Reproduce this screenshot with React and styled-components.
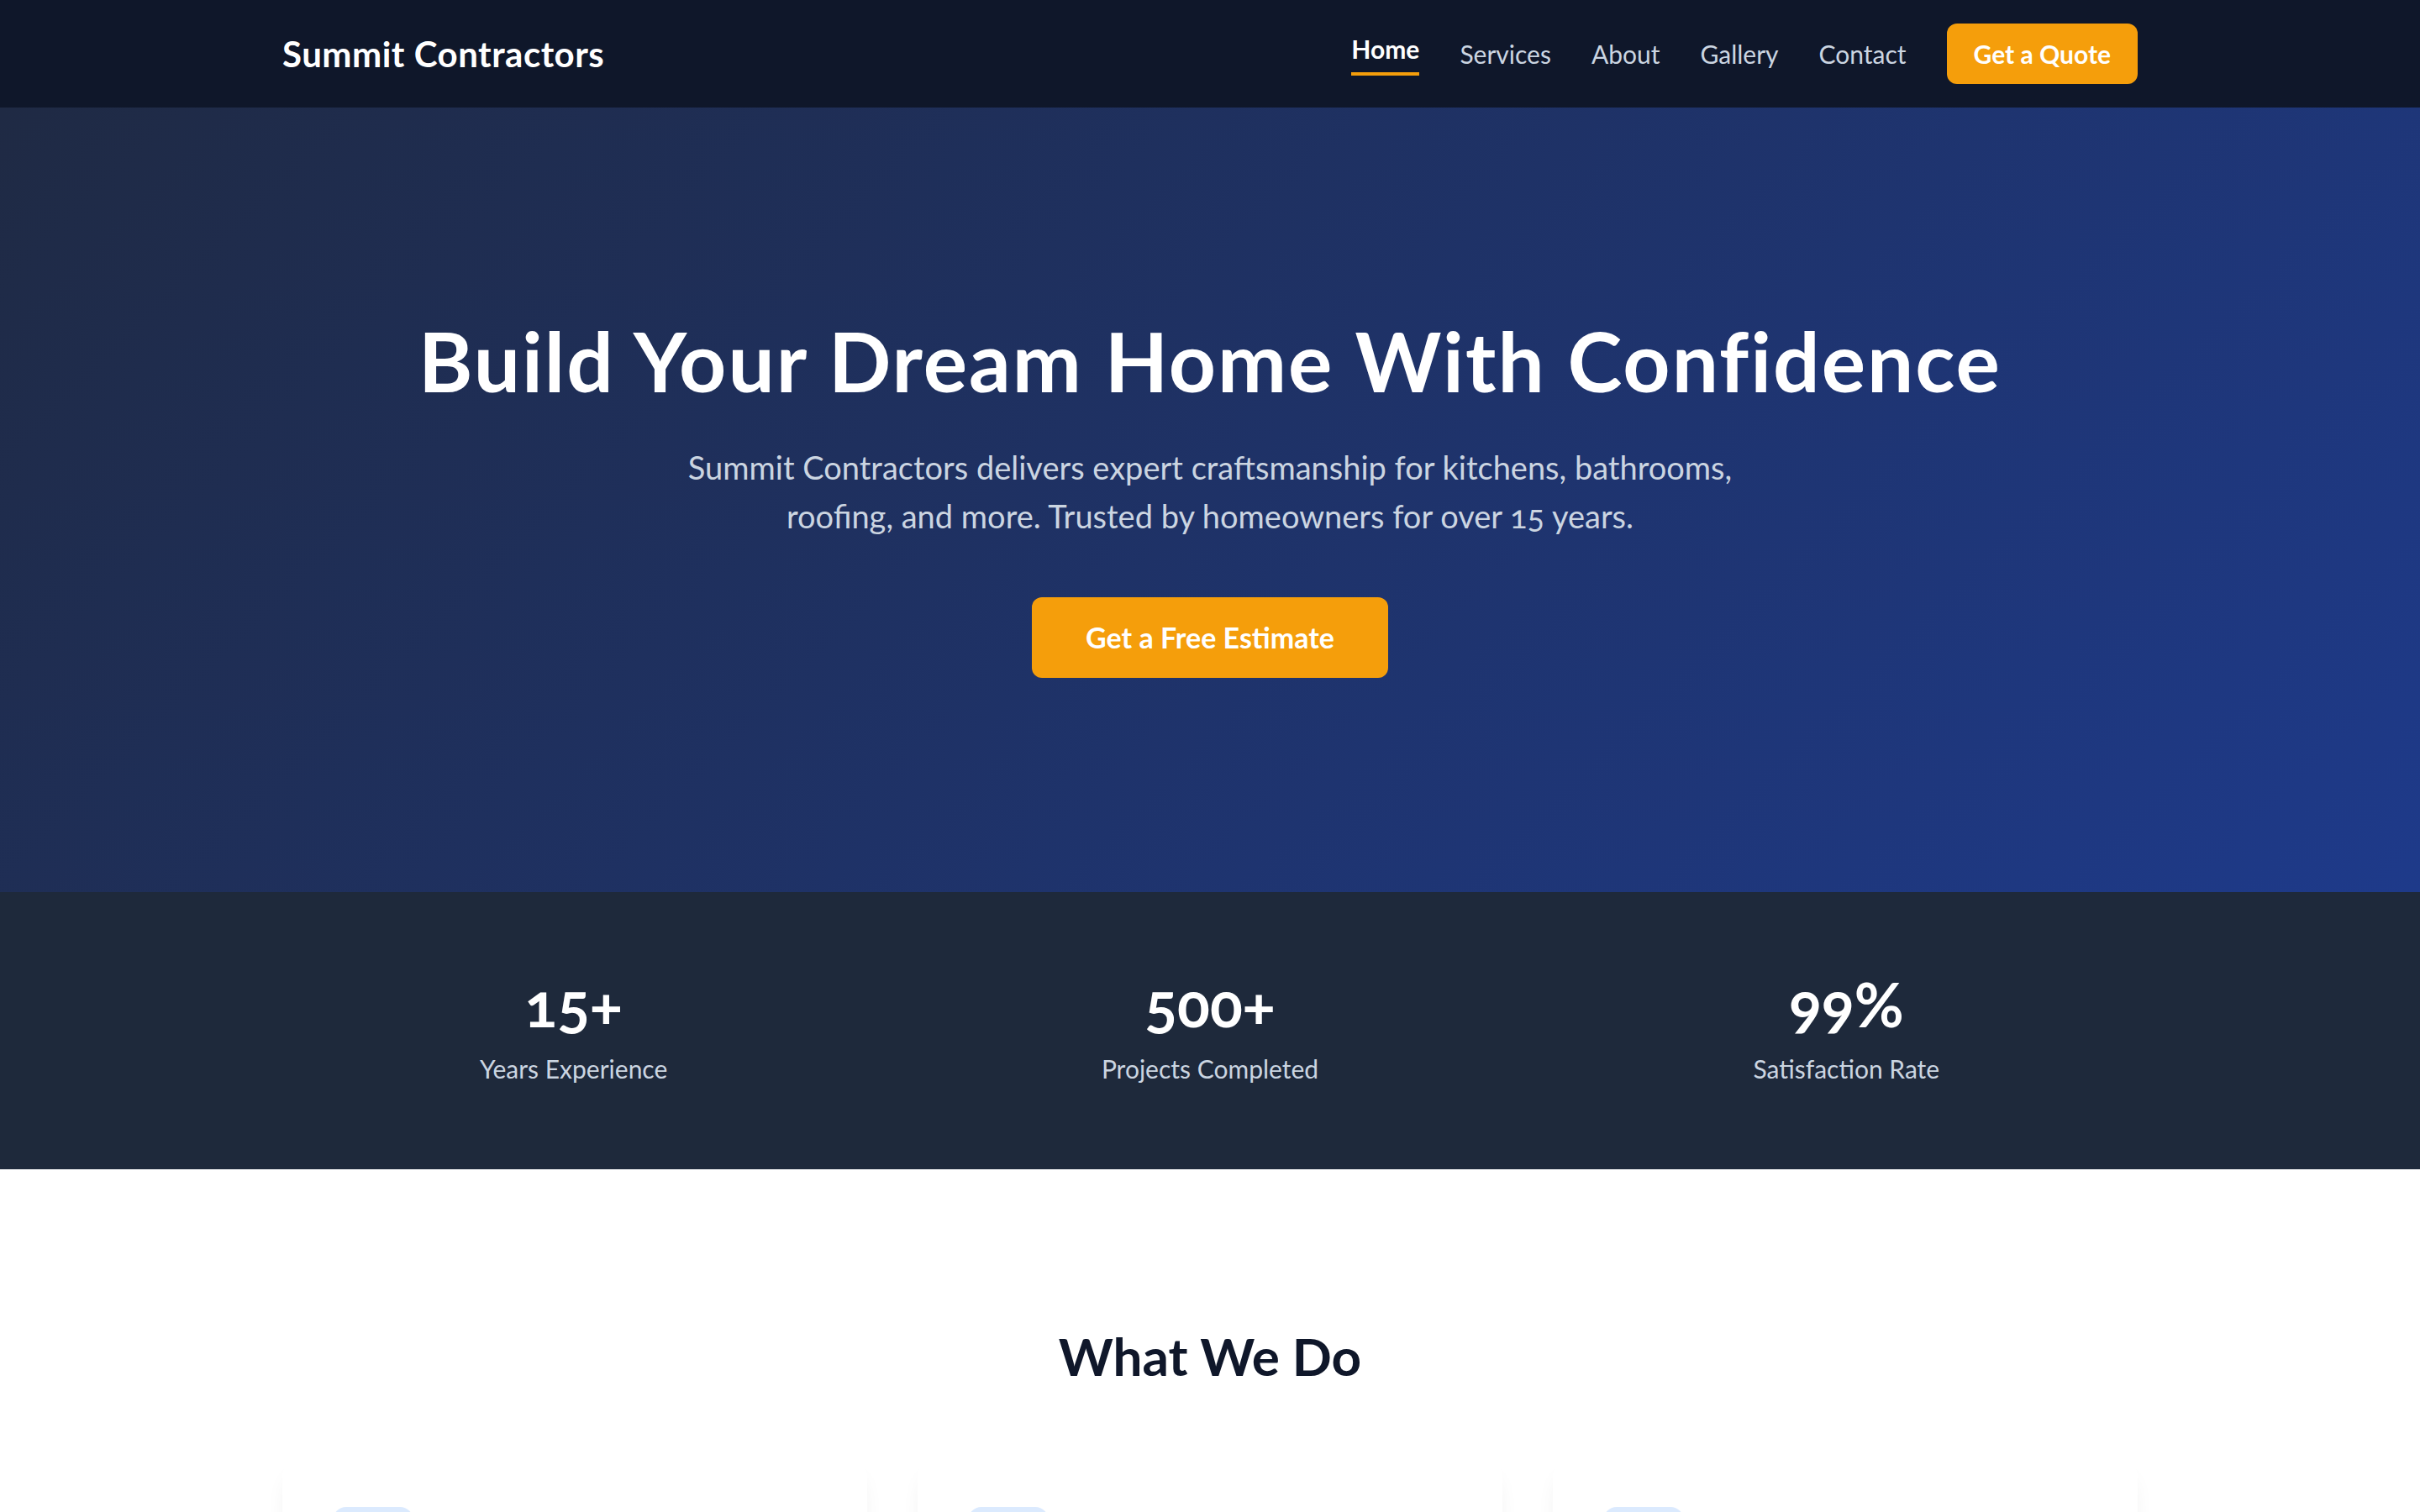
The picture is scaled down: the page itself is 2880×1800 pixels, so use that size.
import React from "react";
import styled, { createGlobalStyle, css } from "styled-components";
import { CookingPot, Bath, House } from "lucide-react";

const GlobalStyle = createGlobalStyle`
  * {
    box-sizing: border-box;
  }

  body {
    margin: 0;
    font-family: "Lato", "Open Sans", Arial, sans-serif;
    background: #ffffff;
    color: #0f172a;
    -webkit-font-smoothing: antialiased;
  }

  a {
    text-decoration: none;
  }
`;

const Container = styled.div`
  max-width: 2400px;
  margin: 0 auto;
  padding: 0 96px;
`;

/* ---------- navbar ---------- */

const Navbar = styled.header`
  height: 128px;
  background: #0f172a;
`;

const NavInner = styled(Container)`
  height: 100%;
  display: flex;
  align-items: center;
  justify-content: space-between;
`;

const Logo = styled.a`
  font-size: 42px;
  font-weight: 700;
  color: #ffffff;
  letter-spacing: 0.5px;
`;

const Menu = styled.nav`
  display: flex;
  align-items: center;
  gap: 48px;
`;

const MenuLink = styled.a`
  font-size: 30px;
  line-height: 40px;
  color: #cbd5e1;
  font-weight: 400;

  ${({ $active }) =>
    $active &&
    css`
      color: #ffffff;
      font-weight: 700;
      padding-bottom: 8px;
      border-bottom: 4px solid #f59e0b;
    `}
`;

const QuoteButton = styled.a`
  padding: 16px 32px;
  border-radius: 12px;
  background: #f59e0b;
  color: #ffffff;
  font-size: 30px;
  line-height: 40px;
  font-weight: 700;
`;

/* ---------- hero ---------- */

const Hero = styled.section`
  padding: 243px 48px 255px;
  background: linear-gradient(135deg, #1f2a44 0%, #1e3a8a 100%);
  text-align: center;
`;

const HeroTitle = styled.h1`
  margin: 0 0 40px;
  font-size: 98px;
  line-height: 116px;
  font-weight: 700;
  letter-spacing: 2px;
  color: #ffffff;
`;

const HeroText = styled.p`
  max-width: 1280px;
  margin: 0 auto 68px;
  font-size: 38px;
  line-height: 58px;
  color: #cbd5e1;
  font-variant-numeric: oldstyle-nums;
`;

const EstimateButton = styled.a`
  display: inline-block;
  padding: 28px 64px;
  border-radius: 12px;
  background: #f59e0b;
  color: #ffffff;
  font-size: 34px;
  line-height: 40px;
  font-weight: 700;
`;

/* ---------- stats ---------- */

const StatsBar = styled.section`
  padding: 90px 0 98px;
  background: #1e293b;
`;

const StatsGrid = styled(Container)`
  display: grid;
  grid-template-columns: repeat(3, 1fr);
  gap: 64px;
  text-align: center;
`;

const StatValue = styled.div`
  font-size: 72px;
  line-height: 86px;
  font-weight: 700;
  color: #ffffff;
  font-variant-numeric: oldstyle-nums;
`;

const StatLabel = styled.div`
  margin-top: 12px;
  font-size: 30px;
  line-height: 44px;
  color: #cbd5e1;
`;

/* ---------- services ---------- */

const Services = styled.section`
  padding: 186px 0 192px;
  background: #ffffff;
`;

const SectionTitle = styled.h2`
  margin: 0 0 84px;
  text-align: center;
  font-size: 62px;
  line-height: 72px;
  font-weight: 700;
  color: #0f172a;
`;

const CardGrid = styled(Container)`
  display: grid;
  grid-template-columns: repeat(3, 1fr);
  gap: 60px;
`;

const Card = styled.article`
  padding: 60px;
  border-radius: 24px;
  background: #ffffff;
  box-shadow: 0 18px 28px -10px rgba(15, 23, 42, 0.1);
`;

const IconBox = styled.div`
  width: 96px;
  height: 96px;
  margin-bottom: 40px;
  border-radius: 16px;
  background: #dbeafe;
  color: #1e3a8a;
  display: flex;
  align-items: center;
  justify-content: center;
`;

const CardTitle = styled.h3`
  margin: 0 0 20px;
  font-size: 40px;
  font-weight: 700;
  color: #0f172a;
`;

const CardText = styled.p`
  margin: 0;
  font-size: 30px;
  line-height: 1.6;
  color: #475569;
`;

const links = ["Home", "Services", "About", "Gallery", "Contact"];

const stats = [
  { value: "15+", label: "Years Experience" },
  { value: "500+", label: "Projects Completed" },
  { value: "99%", label: "Satisfaction Rate" },
];

const services = [
  {
    icon: CookingPot,
    title: "Kitchen Remodeling",
    text: "Custom cabinetry, countertops and layouts designed around the way your family cooks and gathers.",
  },
  {
    icon: Bath,
    title: "Bathroom Renovation",
    text: "From walk-in showers to full spa retreats, we turn tired bathrooms into spaces you love.",
  },
  {
    icon: House,
    title: "Roofing",
    text: "Durable roof repairs and replacements that protect your home through every season.",
  },
];

const App = () => {
  return (
    <>
      <GlobalStyle />
      <Navbar>
        <NavInner>
          <Logo href="/">Summit Contractors</Logo>
          <Menu>
            {links.map((link) => (
              <MenuLink key={link} href="#" $active={link === "Home"}>
                {link}
              </MenuLink>
            ))}
            <QuoteButton href="#">Get a Quote</QuoteButton>
          </Menu>
        </NavInner>
      </Navbar>

      <Hero>
        <HeroTitle>Build Your Dream Home With Confidence</HeroTitle>
        <HeroText>
          Summit Contractors delivers expert craftsmanship for kitchens, bathrooms,
          roofing, and more. Trusted by homeowners for over 15 years.
        </HeroText>
        <EstimateButton href="#">Get a Free Estimate</EstimateButton>
      </Hero>

      <StatsBar>
        <StatsGrid>
          {stats.map((s) => (
            <div key={s.label}>
              <StatValue>{s.value}</StatValue>
              <StatLabel>{s.label}</StatLabel>
            </div>
          ))}
        </StatsGrid>
      </StatsBar>

      <Services>
        <SectionTitle>What We Do</SectionTitle>
        <CardGrid>
          {services.map(({ icon: Icon, title, text }) => (
            <Card key={title}>
              <IconBox>
                <Icon size={48} strokeWidth={2} />
              </IconBox>
              <CardTitle>{title}</CardTitle>
              <CardText>{text}</CardText>
            </Card>
          ))}
        </CardGrid>
      </Services>
    </>
  );
};

export default App;
